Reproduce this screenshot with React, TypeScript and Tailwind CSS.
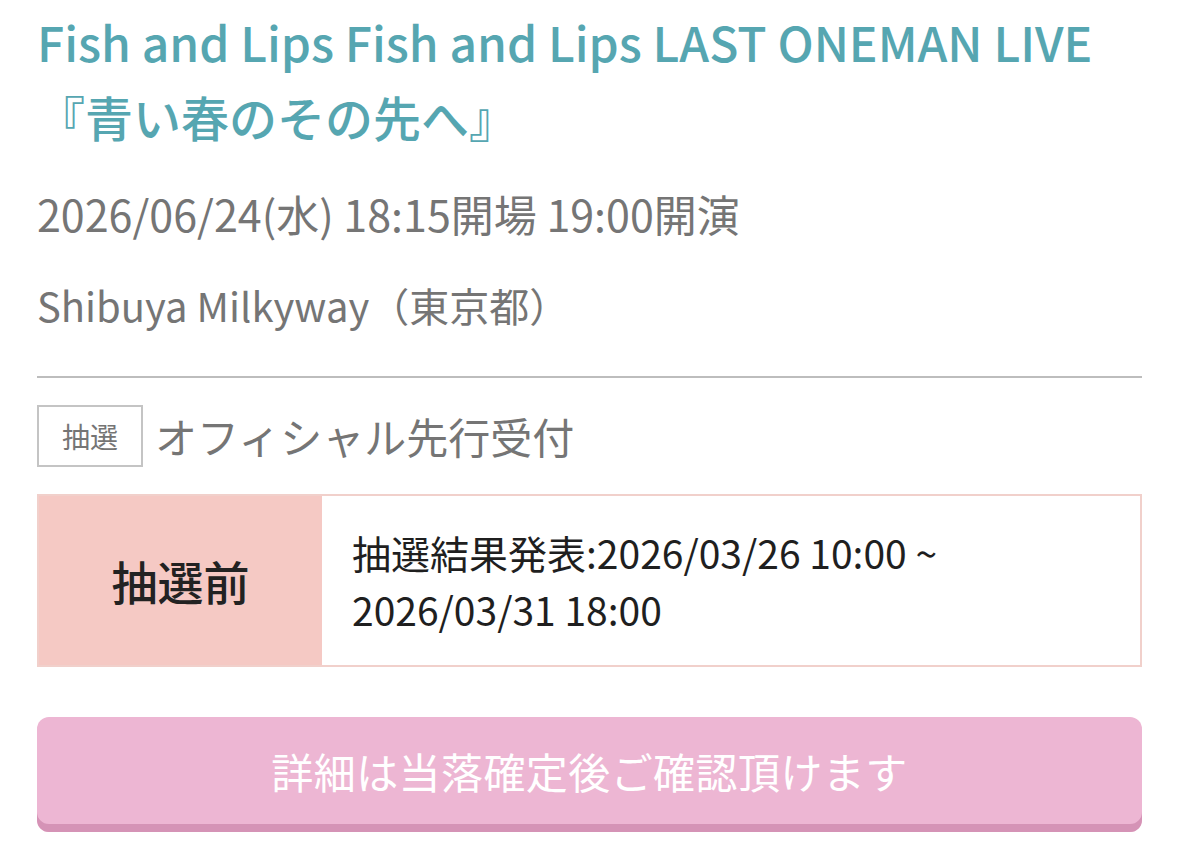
export default function App() {
  return (
    <div
      className="min-h-screen bg-white"
      style={{ fontFamily: '"Noto Sans CJK JP", "Noto Sans", sans-serif' }}
    >
      <main className="px-[37px] pt-[4px]">
        <h1 className="text-[48px] leading-[75px] font-medium text-[#56a6b1]">
          Fish and Lips Fish and Lips LAST ONEMAN LIVE
          <br />
          『青い春のその先へ』
        </h1>

        <p className="mt-[28px] text-[43px] leading-[63px] text-[#757575]">
          2026/06/24(水) 18:15開場 19:00開演
        </p>
        <p className="mt-[30px] text-[40px] leading-[60px] text-[#757575]">
          Shibuya Milkyway（東京都）
        </p>

        <div className="mt-[41px] h-[2px] bg-[#bdbdbd]" />

        <div className="mt-[27px] flex items-center gap-[12px]">
          <span className="flex h-[62px] w-[106px] items-center justify-center border-2 border-[#c4c4c4] text-[28px] text-[#757575]">
            抽選
          </span>
          <span className="text-[42px] leading-[62px] text-[#757575]">
            オフィシャル先行受付
          </span>
        </div>

        <div className="mt-[27px] flex h-[173px] border-2 border-[#f1d0cb]">
          <div className="flex w-[283px] items-center justify-center bg-[#f5c9c4] text-[46px] font-medium text-[#222222]">
            抽選前
          </div>
          <div className="flex flex-1 items-center px-[30px] text-[39px] leading-[57px] text-[#1f1f1f]">
            <p>
              抽選結果発表:2026/03/26 10:00 ~
              <br />
              2026/03/31 18:00
            </p>
          </div>
        </div>

        <button className="mt-[50px] flex h-[115px] w-full items-center justify-center rounded-[12px] bg-[#edb6d3] pb-[8px] text-[42px] tracking-[0.01em] text-white shadow-[inset_0_-8px_0_#d593b6]">
          詳細は当落確定後ご確認頂けます
        </button>
      </main>
    </div>
  );
}
